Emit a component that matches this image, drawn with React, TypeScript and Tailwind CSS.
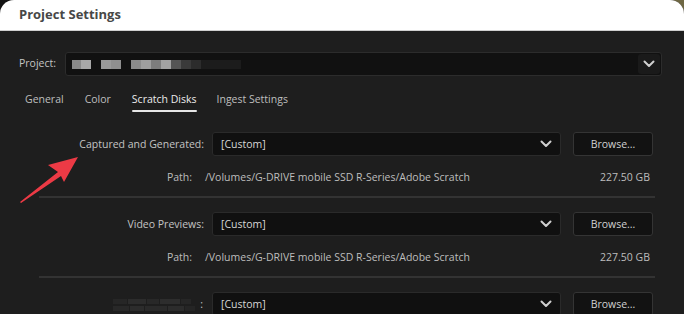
import React from "react";

const font = { fontFamily: '"Open Sans", "Liberation Sans", sans-serif' };

function Chevron() {
  return (
    <svg width="12" height="8" viewBox="0 0 12 8" fill="none">
      <path d="M1.5 1.5 L6 6 L10.5 1.5" stroke="#d0d0d0" strokeWidth="2" strokeLinecap="round" strokeLinejoin="round" />
    </svg>
  );
}

function Section({ label, blurLabel }: { label?: string; blurLabel?: boolean }) {
  return (
    <div className="flex flex-col">
      <div className="flex h-[24px] items-center">
        <div className="w-[204px] flex justify-end items-center text-[10.5px] text-[#c4c4c4] pt-[1px]">
          {blurLabel ? (
            <div className="flex items-center gap-[2px] mr-[1px]">
              <div className="flex flex-col gap-[2px] opacity-50">
                <div className="flex gap-[1px]">
                  <div className="w-[14px] h-[5px] bg-[#2e2e2e]" />
                  <div className="w-[18px] h-[5px] bg-[#3a3a3a]" />
                  <div className="w-[12px] h-[5px] bg-[#333]" />
                  <div className="w-[20px] h-[5px] bg-[#3d3d3d]" />
                  <div className="w-[10px] h-[5px] bg-[#2f2f2f]" />
                </div>
                <div className="flex gap-[1px]">
                  <div className="w-[16px] h-[5px] bg-[#333]" />
                  <div className="w-[14px] h-[5px] bg-[#3a3a3a]" />
                  <div className="w-[22px] h-[5px] bg-[#363636]" />
                  <div className="w-[16px] h-[5px] bg-[#3b3b3b]" />
                  <div className="w-[10px] h-[5px] bg-[#2c2c2c]" />
                </div>
              </div>
              <span className="ml-[3px]">:</span>
            </div>
          ) : (
            <span>{label}</span>
          )}
        </div>
        <div className="ml-[8px] w-[349px] h-[24px] rounded-[3px] bg-[#101010] border border-[#2a2a2a] flex items-center justify-between pl-[8px] pr-[8px]">
          <span className="text-[10.5px] text-[#d6d6d6] pt-[1px]">[Custom]</span>
          <Chevron />
        </div>
        <div className="ml-[12px] w-[80px] h-[24px] rounded-[3px] bg-[#121212] border border-[#343434] flex items-center justify-center text-[10.5px] text-[#d0d0d0] pt-[1px]">
          Browse...
        </div>
      </div>
      <div className="mt-[12px] h-[20px] flex items-center text-[10.5px] text-[#bdbdbd]">
        <div className="w-[192px] text-right">Path:</div>
        <div className="ml-[13px] w-[356px]">/Volumes/G-DRIVE mobile SSD R-Series/Adobe Scratch</div>
        <div className="w-[89px] text-right">227.50 GB</div>
      </div>
      <div className="mt-[8px] ml-[39px] w-[616px] h-[2px] bg-[#333333]" />
      <div className="h-[14px]" />
    </div>
  );
}

export default function App() {
  return (
    <div className="relative w-[684px] h-[314px] overflow-hidden bg-[#141414]" style={font}>
      <div className="absolute right-0 top-0 w-[30px] h-[30px] bg-[#6e6743]" />
      <div className="relative w-[684px] h-[314px] rounded-tl-[14px] rounded-tr-[14px] overflow-hidden bg-[#1e1e1e]">
        <div className="h-[31px] bg-white border-b border-[#cfcfcf] flex items-center pl-[19px]">
          <span className="text-[13px] font-bold text-[#474747]">Project Settings</span>
        </div>
        <div className="pt-[21px]">
          <div className="flex items-center h-[24px]">
            <span className="ml-[19px] text-[10.5px] text-[#c4c4c4]">Project:</span>
            <div className="ml-[9px] w-[597px] h-[24px] rounded-[3px] bg-[#111111] border border-[#2c2c2c] flex items-center justify-between pl-[6px] pr-[1px]">
              <div className="flex items-center h-[9px]">
                <div className="w-[9px] h-[9px] bg-[#8a8a8a]" />
                <div className="w-[10px] h-[9px] bg-[#a8a8a8]" />
                <div className="w-[10px] h-[9px] bg-[#111]" />
                <div className="w-[10px] h-[9px] bg-[#9a9a9a]" />
                <div className="w-[10px] h-[9px] bg-[#8f8f8f]" />
                <div className="w-[10px] h-[9px] bg-[#111]" />
                <div className="w-[10px] h-[9px] bg-[#8c8c8c]" />
                <div className="w-[10px] h-[9px] bg-[#9e9e9e]" />
                <div className="w-[10px] h-[9px] bg-[#7d7d7d]" />
                <div className="w-[10px] h-[9px] bg-[#a2a2a2]" />
                <div className="w-[10px] h-[9px] bg-[#555]" />
                <div className="w-[10px] h-[9px] bg-[#3a3a3a]" />
                <div className="w-[10px] h-[9px] bg-[#2c2c2c]" />
                <div className="w-[40px] h-[9px] bg-[#1c1c1c]" />
              </div>
              <div className="w-[22px] h-[20px] rounded-[3px] bg-[#1a1a1a] flex items-center justify-center">
                <Chevron />
              </div>
            </div>
          </div>
          <div className="mt-[16px] flex items-start h-[22px] text-[10.5px] text-[#bfbfbf]">
            <span className="ml-[25px]">General</span>
            <span className="ml-[21px]">Color</span>
            <div className="ml-[21px] flex flex-col items-stretch">
              <span className="text-[#ececec]">Scratch Disks</span>
              <div className="mt-[2px] h-[2px] bg-[#e6e6e6] rounded-full" />
            </div>
            <span className="ml-[20px]">Ingest Settings</span>
          </div>
          <div className="mt-[18px]">
            <Section label="Captured and Generated:" />
            <Section label="Video Previews:" />
            <Section blurLabel />
          </div>
        </div>
        <svg className="absolute left-0 top-0" width="684" height="314" viewBox="0 0 684 314" style={{ pointerEvents: "none" }}>
          <path d="M20 202 L58 172 L48 165 L78 157 L64 182 L61 176 L21 203 Z" fill="#ec3a45" />
        </svg>
      </div>
    </div>
  );
}
